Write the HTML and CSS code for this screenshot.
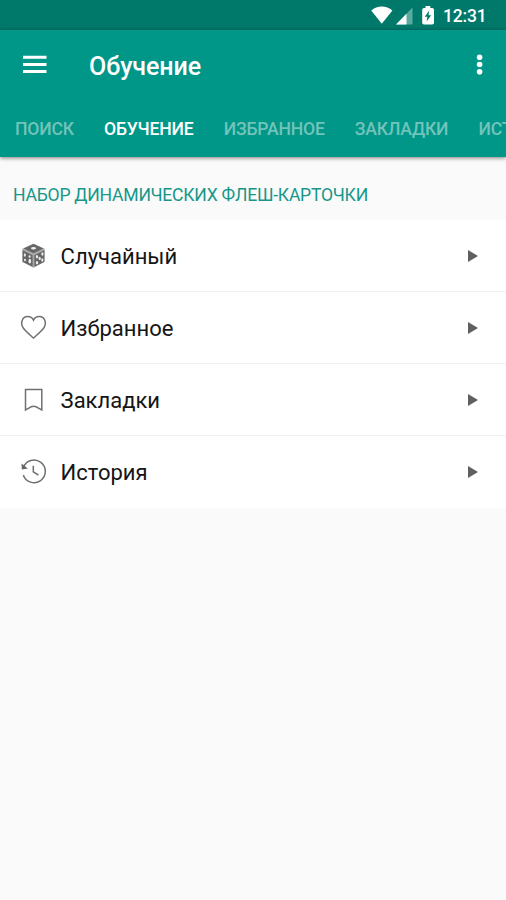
FILE: index.html
```html
<!DOCTYPE html>
<html lang="ru">
<head>
<meta charset="utf-8">
<title>Обучение</title>
<link rel="stylesheet" href="styles.css">
</head>
<body>
<div class="screen">
  <div class="status">
    <svg class="signals" width="66" height="30" viewBox="0 0 66 30">
      <path fill="#fff" d="M0.2 10.4C6.2 5.2 15.4 5.2 21.4 10.4L10.8 23.8Z"/>
      <path fill="#59aba0" d="M41.5 7.5V24.5H25Z"/>
      <path fill="#fff" d="M35.5 13.7V24.5H25Z"/>
      <path fill="#fff" d="M54.5 6H59.3V8H61.2Q63 8 63 9.8V22.7Q63 24.5 61.2 24.5H53Q51.2 24.5 51.2 22.7V9.8Q51.2 8 53 8H54.5Z"/>
      <path fill="#00796b" d="M58.2 10.5L53.8 16.8H56.4L55.6 21.5L60.2 15.2H57.5Z"/>
    </svg>
    <span class="clock">12:31</span>
  </div>
  <header class="appbar">
    <div class="toolbar">
      <svg class="menu" width="24" height="20" viewBox="0 0 24 20"><path d="M0 2.3H23.5M0 9.5H23.5M0 16.6H23.5" stroke="#fff" stroke-width="3"/></svg>
      <h1 class="title">Обучение</h1>
      <svg class="more" width="8" height="22" viewBox="0 0 8 22"><g fill="#fff"><circle cx="3.6" cy="3.3" r="2.8"/><circle cx="3.6" cy="10.5" r="2.8"/><circle cx="3.6" cy="17.7" r="2.8"/></g></svg>
    </div>
    <nav class="tabs">
      <span class="tab">ПОИСК</span>
      <span class="tab active">ОБУЧЕНИЕ</span>
      <span class="tab">ИЗБРАННОЕ</span>
      <span class="tab">ЗАКЛАДКИ</span>
      <span class="tab">ИСТОРИЯ</span>
    </nav>
  </header>
  <h2 class="section">НАБОР ДИНАМИЧЕСКИХ ФЛЕШ-КАРТОЧКИ</h2>
  <ul class="list">
    <li class="row">
      <svg class="icon" viewBox="0 0 28 28">
        <path fill="#aaa" d="M13.5 1.5L24.6 6.8V20L13.5 25.7L2.4 20V6.8Z"/>
        <path fill="#666" d="M13.5 2L23.4 6.5L13.5 11.2L3.6 6.5ZM2.6 8.2L12.6 13.2V24.8L2.6 19.7ZM24.4 8.2L14.4 13.2V24.8L24.4 19.7Z"/>
        <g fill="#eee"><ellipse cx="13.5" cy="6.3" rx="2.5" ry="1.2"/><ellipse cx="4.8" cy="13" rx="1" ry="1.8"/><ellipse cx="9.8" cy="19.2" rx="1.3" ry="2.4"/><ellipse cx="9.6" cy="14.5" rx="1" ry="1.3"/><ellipse cx="5" cy="18" rx="1" ry="1.3"/><ellipse cx="17" cy="14.8" rx="1.2" ry="1.7"/><ellipse cx="22.4" cy="12" rx="1.1" ry="1.7"/><ellipse cx="19.7" cy="16.4" rx="1.1" ry="1.6"/><ellipse cx="17" cy="20.7" rx="1.2" ry="1.7"/><ellipse cx="22.3" cy="18" rx="1.1" ry="1.7"/></g>
      </svg>
      <span class="label">Случайный</span><span class="arrow"></span>
    </li>
    <li class="row">
      <svg class="icon" viewBox="0 0 28 28"><path class="line" d="M13.5 24C11 21.6 5 17.2 2.7 13.2C0.3 8.9 2.3 2.6 7.6 2.6C10.5 2.6 12.5 4 13.5 6.2C14.5 4 16.5 2.6 19.4 2.6C24.7 2.6 26.7 8.9 24.3 13.2C22 17.2 16 21.6 13.5 24Z"/></svg>
      <span class="label">Избранное</span><span class="arrow"></span>
    </li>
    <li class="row">
      <svg class="icon" viewBox="0 0 28 28"><path class="line" d="M5.5 3.5H21.8V24L18.5 22.2Q13.6 18.4 8.8 22.2L5.5 24Z"/></svg>
      <span class="label">Закладки</span><span class="arrow"></span>
    </li>
    <li class="row">
      <svg class="icon" viewBox="0 0 28 28"><path class="line" d="M3.4 9.5A11.3 11.3 0 1 1 3.3 17M13.3 7.8V13.8L18.4 17"/><path fill="#666" d="M1.5 5.5L7.8 10.5L1.8 11.4Z"/></svg>
      <span class="label">История</span><span class="arrow"></span>
    </li>
  </ul>
</div>
</body>
</html>
```
FILE: styles.css
```css
* { box-sizing: border-box; }
body { margin: 0; background: #fafafa; font-family: Roboto, "Liberation Sans", sans-serif; }
.screen { width: 506px; height: 900px; overflow: hidden; }
.status { height: 30px; background: #00796b; display: flex; align-items: center; justify-content: flex-end; padding-right: 19px; gap: 6px; }
.clock { color: #fff; font-size: 17.5px; letter-spacing: -0.2px; line-height: 30px; font-weight: 500; width: 44px; white-space: nowrap; padding-top: 2px; }
.appbar { height: 127px; background: #009688; box-shadow: 0 1px 4px rgba(0,0,0,.5); }
.toolbar { height: 70px; display: flex; align-items: center; padding: 0 22px 0 23px; }
.menu { flex: none; }
.title { margin: 3px 0 0 42px; flex: 1; font-size: 25px; letter-spacing: -0.08px; line-height: 30px; font-weight: 500; color: #fff; }
.more { flex: none; }
.tabs { height: 57px; display: flex; gap: 30.2px; padding: 19px 0 0 15px; overflow: hidden; }
.tab { font-size: 17.6px; letter-spacing: -0.2px; line-height: 20px; font-weight: 500; color: #72c4bb; white-space: nowrap; }
.active { color: #fff; }
.section { margin: 0; height: 63px; padding: 27px 0 0 13px; font-size: 17.6px; letter-spacing: -0.25px; line-height: 22px; font-weight: 400; color: #169789; white-space: nowrap; }
.list { margin: 0; padding: 0; list-style: none; background: #fff; height: 288px; }
.row { height: 72px; display: flex; align-items: center; padding: 0 28px 0 20px; border-bottom: 1px solid #f1f1f1; }
.row:last-child { border-bottom: 0; }
.icon { width: 28px; height: 28px; flex: none; }
.line { fill: none; stroke: #707070; stroke-width: 1.5; }
.label { flex: 1; margin-left: 12.6px; padding-top: 2px; font-size: 22px; line-height: 28px; color: #151515; }
.arrow { border-left: 10.5px solid #606060; border-top: 6px solid transparent; border-bottom: 6px solid transparent; }
```
